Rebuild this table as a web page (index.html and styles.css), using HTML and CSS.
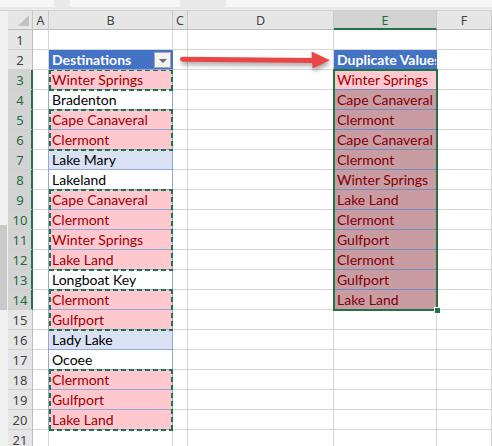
FILE: index.html
```html
<!DOCTYPE html>
<html>
<head>
<meta charset="utf-8">
<link rel="stylesheet" href="styles.css">
</head>
<body>
<div class="top"><div class="box b1"></div><div class="box b2"></div><div class="box b3"></div></div>
<div class="app">
  <div class="pane"><div class="grip"></div></div>
  <div class="stack">
    <div class="sheet">
      <div class="corner"></div>
      <div class="ch">A</div><div class="ch">B</div><div class="ch">C</div><div class="ch">D</div><div class="ch sel">E</div><div class="ch">F</div>

      <div class="rh">1</div><div class="c"></div><div class="c"></div><div class="c"></div><div class="c"></div><div class="c"></div><div class="c"></div>
      <div class="rh">2</div><div class="c"></div><div class="c hdr">Destinations<span class="filter"></span></div><div class="c"></div><div class="c"></div><div class="c hdr">Duplicate Values</div><div class="c"></div>
      <div class="rh sel">3</div><div class="c"></div><div class="c b dup">Winter Springs</div><div class="c"></div><div class="c"></div><div class="c e act">Winter Springs</div><div class="c"></div>
      <div class="rh sel">4</div><div class="c"></div><div class="c b">Bradenton</div><div class="c"></div><div class="c"></div><div class="c e">Cape Canaveral</div><div class="c"></div>
      <div class="rh sel">5</div><div class="c"></div><div class="c b dup">Cape Canaveral</div><div class="c"></div><div class="c"></div><div class="c e">Clermont</div><div class="c"></div>
      <div class="rh sel">6</div><div class="c"></div><div class="c b dup">Clermont</div><div class="c"></div><div class="c"></div><div class="c e">Cape Canaveral</div><div class="c"></div>
      <div class="rh sel">7</div><div class="c"></div><div class="c b band">Lake Mary</div><div class="c"></div><div class="c"></div><div class="c e">Clermont</div><div class="c"></div>
      <div class="rh sel">8</div><div class="c"></div><div class="c b">Lakeland</div><div class="c"></div><div class="c"></div><div class="c e">Winter Springs</div><div class="c"></div>
      <div class="rh sel">9</div><div class="c"></div><div class="c b dup">Cape Canaveral</div><div class="c"></div><div class="c"></div><div class="c e">Lake Land</div><div class="c"></div>
      <div class="rh sel">10</div><div class="c"></div><div class="c b dup">Clermont</div><div class="c"></div><div class="c"></div><div class="c e">Clermont</div><div class="c"></div>
      <div class="rh sel">11</div><div class="c"></div><div class="c b dup">Winter Springs</div><div class="c"></div><div class="c"></div><div class="c e">Gulfport</div><div class="c"></div>
      <div class="rh sel">12</div><div class="c"></div><div class="c b dup">Lake Land</div><div class="c"></div><div class="c"></div><div class="c e">Clermont</div><div class="c"></div>
      <div class="rh sel">13</div><div class="c"></div><div class="c b">Longboat Key</div><div class="c"></div><div class="c"></div><div class="c e">Gulfport</div><div class="c"></div>
      <div class="rh sel">14</div><div class="c"></div><div class="c b dup">Clermont</div><div class="c"></div><div class="c"></div><div class="c e">Lake Land</div><div class="c"></div>
      <div class="rh">15</div><div class="c"></div><div class="c b dup">Gulfport</div><div class="c"></div><div class="c"></div><div class="c"></div><div class="c"></div>
      <div class="rh">16</div><div class="c"></div><div class="c b band">Lady Lake</div><div class="c"></div><div class="c"></div><div class="c"></div><div class="c"></div>
      <div class="rh">17</div><div class="c"></div><div class="c b">Ocoee</div><div class="c"></div><div class="c"></div><div class="c"></div><div class="c"></div>
      <div class="rh">18</div><div class="c"></div><div class="c b dup">Clermont</div><div class="c"></div><div class="c"></div><div class="c"></div><div class="c"></div>
      <div class="rh">19</div><div class="c"></div><div class="c b dup">Gulfport</div><div class="c"></div><div class="c"></div><div class="c"></div><div class="c"></div>
      <div class="rh">20</div><div class="c"></div><div class="c b dup">Lake Land</div><div class="c"></div><div class="c"></div><div class="c"></div><div class="c"></div>
      <div class="rh">21</div><div class="c"></div><div class="c"></div><div class="c"></div><div class="c"></div><div class="c"></div><div class="c"></div>
    </div>
    <div class="overlay">
      <div class="ants g1"></div>
      <div class="ants g2"></div>
      <div class="ants g3"></div>
      <div class="ants g4"></div>
      <div class="ants g5"></div>
      <div class="selection"><span class="handle"></span></div>
      <svg class="arrow" width="161" height="20" viewBox="0 0 161 20">
        <path d="M9.5 9.2 L140 10.6" stroke="#ea4646" stroke-width="5" stroke-linecap="round" fill="none"/>
        <path d="M138.5 1.5 L157 10.2 L139.5 18.5 Z" fill="#ea4646"/>
      </svg>
    </div>
  </div>
</div>
</body>
</html>
```

FILE: styles.css
```css
* { box-sizing: border-box; }
html, body { margin: 0; padding: 0; }
body {
  width: 492px;
  height: 446px;
  overflow: hidden;
  background: #ffffff;
  font-family: Lato, "Open Sans", sans-serif;
}

.top {
  height: 11px;
  background: #e9e9e9;
  border-bottom: 1px solid #d4d4d4;
  display: flex;
  gap: 6px;
  padding: 0 0 3px 0;
}
.top .box { background: #f6f6f6; height: 7px; }
.top .b1 { width: 54px; }
.top .b2 { width: 110px; margin-left: 10px; }
.top .b3 { flex: 1; margin-left: 40px; }

.app { display: flex; }

.pane {
  width: 8px;
  background: #f1f1f1;
  display: flex;
  flex-direction: column;
  padding-top: 214px;
}
.grip {
  width: 7px;
  height: 85px;
  background: #c9c9c9;
}

.stack { display: grid; }
.stack > * { grid-area: 1 / 1; }

.sheet, .overlay {
  display: grid;
  grid-template-columns: 25px 16px 124px 15px 146px 103px 55px;
  grid-template-rows: 19px;
  grid-auto-rows: 20px;
}
.overlay { pointer-events: none; }

.corner {
  background: #e6e6e6;
  border-right: 1px solid #c8c8c8;
  border-bottom: 1px solid #bdbdbd;
  position: relative;
}
.corner::after {
  content: "";
  position: absolute;
  right: 3px;
  bottom: 3px;
  width: 0; height: 0;
  border-left: 11px solid transparent;
  border-bottom: 11px solid #c2c2c2;
}

.ch {
  background: #e6e6e6;
  border-right: 1px solid #cacaca;
  border-bottom: 1px solid #bdbdbd;
  color: #444444;
  font-family: "Noto Sans", sans-serif;
  font-size: 12.5px;
  line-height: 19px;
  text-align: center;
}
.ch.sel {
  background: #d3d3d3;
  color: #1d6b40;
  border-bottom: 2px solid #217346;
}

.rh {
  background: #e6e6e6;
  border-right: 1px solid #bdbdbd;
  border-bottom: 1px solid #d0d0d0;
  color: #444444;
  font-family: "Noto Sans", sans-serif;
  font-size: 13px;
  line-height: 20px;
  text-align: center;
}
.rh.sel {
  background: #d3d3d3;
  color: #1d6b40;
  border-right: 2px solid #217346;
  padding-left: 1px;
}

.c {
  border-right: 1px solid #d6d6d6;
  border-bottom: 1px solid #d6d6d6;
  padding-left: 3px;
  font-size: 14px;
  line-height: 20px;
  color: #000000;
  white-space: nowrap;
  overflow: hidden;
}

.c.hdr {
  background: #4472c4;
  color: #ffffff;
  font-weight: 700;
  border-right-color: #4472c4;
  border-bottom-color: #8eaadb;
  position: relative;
}
.filter {
  position: absolute;
  right: 1px;
  top: 2px;
  width: 17px;
  height: 16px;
  background: #f3f3f3;
  border: 1px solid #a9a9a9;
}
.filter::after {
  content: "";
  position: absolute;
  left: 4px;
  top: 6px;
  border-left: 4px solid transparent;
  border-right: 4px solid transparent;
  border-top: 4px solid #6a6a6a;
}

.c.b {
  border-right-color: #8eaadb;
  border-bottom-color: #8eaadb;
  box-shadow: -1px 0 0 #8eaadb;
}
.c.b.dup { background: #ffc7ce; color: #9c0006; }
.c.b.band { background: #d9e1f2; }

.c.e {
  background: #c99ca2;
  color: #80000a;
  border-bottom-color: #6f8fc4;
}
.c.e.act { background: #ffc7ce; color: #9c0006; }

.ants {
  grid-column: 3;
  margin: -1px 0 -1px 0;
  background:
    repeating-linear-gradient(90deg, #217346 0 5px, transparent 5px 8px) top / 100% 2px no-repeat,
    repeating-linear-gradient(90deg, #217346 0 5px, transparent 5px 8px) bottom / 100% 2px no-repeat,
    repeating-linear-gradient(180deg, #217346 0 5px, transparent 5px 8px) left / 2px 100% no-repeat,
    repeating-linear-gradient(180deg, #217346 0 5px, transparent 5px 8px) right / 2px 100% no-repeat;
}
.g1 { grid-row: 4 / 5; }
.g2 { grid-row: 6 / 8; }
.g3 { grid-row: 10 / 14; }
.g4 { grid-row: 15 / 17; }
.g5 { grid-row: 19 / 22; }

.selection {
  grid-column: 6;
  grid-row: 4 / 16;
  margin: -1px -1px -1px -1px;
  border: 2px solid #217346;
  position: relative;
}
.handle {
  position: absolute;
  right: -5px;
  bottom: -5px;
  width: 7px;
  height: 7px;
  background: #217346;
  border: 1px solid #ffffff;
}

.arrow {
  grid-column: 4 / 6;
  grid-row: 3;
  overflow: visible;
  filter: drop-shadow(1px 3px 2px rgba(0, 0, 0, 0.35));
}
```
